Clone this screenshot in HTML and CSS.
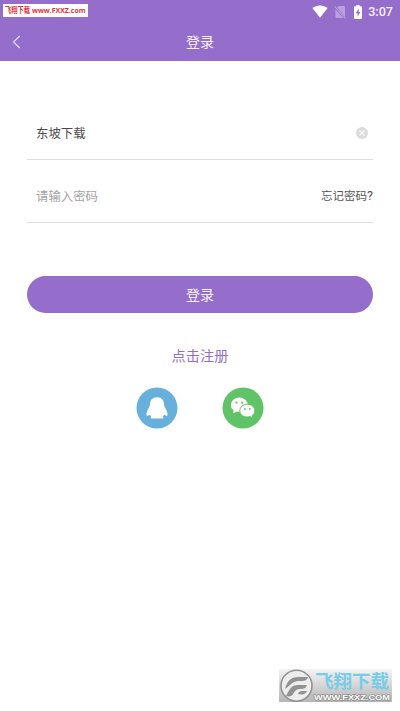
FILE: index.html
```html
<!DOCTYPE html>
<html lang="zh-CN">
<head>
<meta charset="utf-8">
<meta name="viewport" content="width=device-width, initial-scale=1">
<title>登录</title>
<link rel="stylesheet" href="styles.css">
</head>
<body>
<div class="screen">
  <header class="header">
    <div class="status">
      <svg class="wifi" width="16" height="13" viewBox="0 0 16 13"><path d="M.3 3.1C4.800-.4 11.200-.4 15.700 3.100L8 12.700Z" fill="#fff"/></svg>
      <svg class="sim" width="12" height="14" viewBox="0 0 12 14"><path d="M4.500 1H10a1 1 0 0 1 1 1v10L3.200 2.400ZM1.400 4.200 9.500 13H2.400a1 1 0 0 1-1-1Z" fill="#b99fdd"/><path d="M.7 1.500 11.500 13.300" stroke="#b99fdd" stroke-width="1.100"/></svg>
      <svg class="battery" width="8" height="14" viewBox="0 0 8 14"><path d="M2.300 0h3.400v1.300H7a1 1 0 0 1 1 1V13a1 1 0 0 1-1 1H1a1 1 0 0 1-1-1V2.300a1 1 0 0 1 1-1h1.300Z" fill="#fff"/><path d="M4.700 3.600 1.800 8.300h1.800v3.500l2.700-4.700H4.700Z" fill="#956dcb"/></svg>
      <span class="time">3:07</span>
    </div>
    <div class="nav">
      <svg class="back" width="9" height="14" viewBox="0 0 9 14"><path d="M7.700 1 1.500 7l6.200 6" fill="none" stroke="#e6daf4" stroke-width="1.200"/></svg>
      <h1 class="title">登录</h1>
    </div>
  </header>
  <main class="form">
    <div class="field field-user">
      <span class="value">东坡下载</span>
      <svg class="clear" width="12" height="12" viewBox="0 0 12 12"><circle cx="6" cy="6" r="6" fill="#dcdcdc"/><path d="m3.500 3.500 5 5m0-5-5 5" stroke="#fff" stroke-width="1.100"/></svg>
    </div>
    <div class="field field-pass">
      <span class="placeholder">请输入密码</span>
      <span class="forgot">忘记密码<span class="mark">?</span></span>
    </div>
    <button class="submit"><span class="submit-label">登录</span></button>
    <a class="register">点击注册</a>
    <div class="social">
      <svg width="42" height="42" viewBox="0 0 42 42"><circle cx="21" cy="21" r="20.500" fill="#67b0dc"/><path d="M21 10.200c-4.500 0-7 3-7 6.800 0 2-.9 3.200-1.900 5.200-1.300 2.600-2 4.700-1.500 6.100.5 1 1.700.6 2.500-.2.700-.4 1.300.2 1.700.9.500.8.300 1.200-.1 1.600-.4.500.1.900 1 .9h10.600c.9 0 1.400-.4 1-.9-.4-.4-.6-.8-.1-1.600.4-.7 1-1.300 1.700-.9.800.8 2 1.200 2.500.2.500-1.400-.2-3.500-1.500-6.100-1-2-1.900-3.200-1.900-5.200 0-3.800-2.500-6.800-7-6.800Z" fill="#fff"/></svg>
      <svg width="42" height="42" viewBox="0 0 42 42"><circle cx="21" cy="21" r="20.500" fill="#61c367"/><path d="m12 21-.9 5.300 4.300-2.100Z" fill="#fff"/><ellipse cx="17.300" cy="17.800" rx="8.500" ry="7.200" fill="#fff"/><path d="M17.800 23.700c0-3.700 3.300-6.500 7.500-6.500s7.500 2.900 7.500 6.500c0 2-1 3.700-2.600 4.800l.6 2.400-2.700-1.400c-5.600 1.800-10.300-1.400-10.300-5.800Z" fill="#fff" stroke="#61c367"/><g fill="#61c367"><circle cx="14.400" cy="15.600" r="1.100"/><circle cx="20.200" cy="15.600" r="1.100"/><circle cx="22.900" cy="21.900" r=".9"/><circle cx="27.800" cy="21.900" r=".9"/></g></svg>
    </div>
  </main>
  <div class="site-tag">
    <svg width="85" height="13" viewBox="0 0 85 13"><g class="tag-text"><text x="2" y="9.300" textLength="25" lengthAdjust="spacingAndGlyphs">飞翔下载</text><text x="29" y="8.700" textLength="53.500" lengthAdjust="spacingAndGlyphs">www.FXXZ.com</text></g></svg>
  </div>
  <div class="watermark">
    <svg width="113" height="33" viewBox="0 0 113 33">
      <defs><linearGradient id="fade" x1="0" y1="0" x2="0" y2="1"><stop offset="0" stop-color="#f4f4f4"/><stop offset="1" stop-color="#b5b5b5"/></linearGradient></defs>
      <rect width="113" height="33" fill="url(#fade)"/>
      <circle cx="17.500" cy="16.700" r="15.500" fill="#ededed" stroke="#929292" stroke-width="1.600"/>
      <path d="M6 20c2-8 6-12 13-12h10c-1 3-3 4-6 4h-4c-5 0-7 4-13 8Zm1 7c4-8 6-11 12-11h9c-1 3-3 4-6 4-5 0-6 2-8 5-1 2-3 3-7 2Zm12-2c1-3 3-3 5-3h4c-1 3-4 4-9 3Z" fill="#929292"/>
      <text class="mark-cn" x="36" y="19" textLength="74" lengthAdjust="spacingAndGlyphs">飞翔下载</text>
      <text class="mark-url" x="35" y="31" textLength="76" lengthAdjust="spacingAndGlyphs">WWW.FXXZ.COM</text>
    </svg>
  </div>
</div>
</body>
</html>
```
FILE: styles.css
```css
* { box-sizing: border-box; }
body {
  margin: 0;
  background: #fff;
  font-family: Roboto, "Noto Sans CJK SC", sans-serif;
}
svg { display: block; flex: none; overflow: visible; }
.screen {
  position: relative;
  height: 711px;
  overflow: hidden;
}
.header {
  height: 61px;
  background: #956dcb;
  color: #fff;
}
.status {
  display: flex;
  align-items: center;
  justify-content: flex-end;
  height: 23px;
  padding-right: 7px;
}
.sim { margin-left: 6px; }
.battery { margin-left: 8px; }
.time {
  margin-left: 6px;
  font-size: 12.6px;
  font-weight: 500;
  line-height: 23px;
  color: #f6f0fc;
}
.nav {
  display: grid;
  grid-template-columns: 60px 1fr 60px;
  align-items: center;
  height: 38px;
}
.back { margin-left: 12px; }
.title {
  margin: 0;
  text-align: center;
  font-size: 14px;
  line-height: 38px;
  font-weight: 400;
  color: #f8f2fd;
}
.form {
  display: flex;
  flex-direction: column;
  padding: 45px 27px 0;
}
.field {
  display: flex;
  align-items: center;
  justify-content: space-between;
  border-bottom: 1px solid #dedede;
  padding-left: 9px;
}
.field-user { height: 54px; padding-right: 5px; }
.field-pass { height: 63px; padding-top: 10px; }
.value, .placeholder {
  font-size: 12.4px;
  line-height: 20px;
}
.value { color: #4a4a4a; padding-top: 2px; }
.placeholder { color: #a3a3a3; padding-top: 1px; }
.forgot {
  font-size: 11.5px;
  line-height: 20px;
  color: #555;
}
.mark { font-size: 12.5px; line-height: 1; }
.submit {
  height: 37px;
  margin-top: 53px;
  padding: 0 0 2px;
  border: 0;
  border-radius: 19px;
  background: #956dcb;
  color: #f8f2fd;
  font: inherit;
  font-size: 14px;
}
.register {
  align-self: center;
  margin-top: 33px;
  font-size: 14.2px;
  line-height: 20px;
  color: #956dcb;
}
.social {
  display: flex;
  justify-content: center;
  gap: 44px;
  margin-top: 21px;
}
.site-tag {
  position: absolute;
  left: 3px;
  top: 4px;
  background: #fff;
}
.tag-text {
  fill: #e0323c;
  font: 700 7.5px "Open Sans", "Noto Sans CJK SC", sans-serif;
}
.watermark {
  position: absolute;
  left: 279px;
  top: 669px;
}
.mark-cn {
  font: 700 18px "Noto Sans CJK SC", sans-serif;
  fill: #79cbea;
}
.mark-url {
  font: 700 7.5px "Liberation Sans", sans-serif;
  fill: #fff;
  stroke: #858585;
  stroke-width: 1.2px;
  paint-order: stroke;
}
```
